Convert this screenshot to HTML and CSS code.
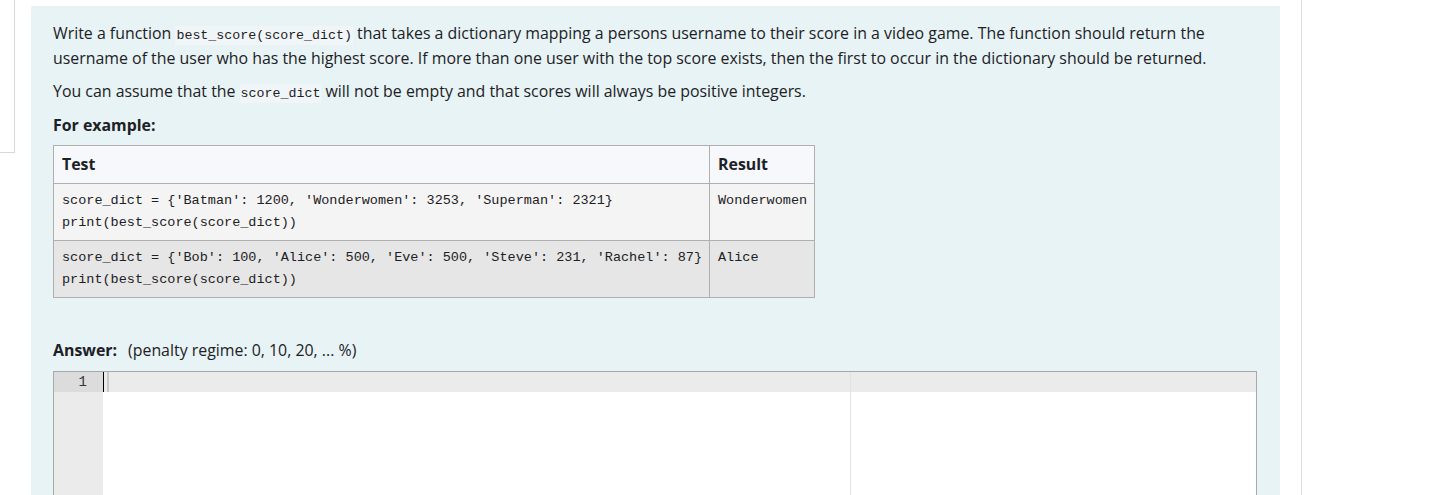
FILE: index.html
```html
<!DOCTYPE html>
<html>
<head>
<meta charset="utf-8">
<link rel="stylesheet" href="styles.css">
</head>
<body>
<div class="page">
  <div class="stub"></div>
  <main class="panel">
    <p>Write a function <code>best_score(score_dict)</code> that takes a dictionary mapping a persons username to their score in a video game. The function should return the username of the user who has the highest score. If more than one user with the top score exists, then the first to occur in the dictionary should be returned.</p>
    <p>You can assume that the <code>score_dict</code> will not be empty and that scores will always be positive integers.</p>
    <h4 class="example-title">For example:</h4>
    <table class="examples">
      <thead>
        <tr><th>Test</th><th>Result</th></tr>
      </thead>
      <tbody>
        <tr class="r0">
          <td><pre>score_dict = {'Batman': 1200, 'Wonderwomen': 3253, 'Superman': 2321}
print(best_score(score_dict))</pre></td>
          <td><pre>Wonderwomen</pre></td>
        </tr>
        <tr class="r1">
          <td><pre>score_dict = {'Bob': 100, 'Alice': 500, 'Eve': 500, 'Steve': 231, 'Rachel': 87}
print(best_score(score_dict))</pre></td>
          <td><pre>Alice</pre></td>
        </tr>
      </tbody>
    </table>
    <div class="answer-label"><b>Answer:</b><span class="penalty">(penalty regime: 0, 10, 20, ... %)</span></div>
    <div class="editor">
      <div class="gutter">
        <div class="gutter-cell active">1</div>
      </div>
      <div class="content">
        <div class="active-line"></div>
        <div class="cursor"></div>
        <div class="text-bar"></div>
        <div class="print-margin"></div>
      </div>
    </div>
  </main>
  <div class="divider"></div>
</div>
</body>
</html>
```
FILE: styles.css
```css
html, body {
  margin: 0;
  padding: 0;
  background: #ffffff;
}
body {
  font-family: "Open Sans", "Noto Sans", sans-serif;
  font-size: 15.9px;
  color: #1d2125;
  overflow: hidden;
}
.page {
  display: flex;
  align-items: flex-start;
  height: 495px;
  overflow: hidden;
}
.stub {
  flex: none;
  box-sizing: border-box;
  width: 15px;
  height: 153px;
  border-right: 1px solid #d3d8dd;
  border-bottom: 1px solid #d3d8dd;
  margin-right: 16px;
}
.panel {
  flex: none;
  box-sizing: border-box;
  width: 1249px;
  height: 489px;
  margin-top: 6px;
  padding: 15px 23px 0 22px;
  background: #e7f3f5;
  overflow: hidden;
}
.panel p {
  margin: 0 0 9px 0;
  line-height: 24.5px;
}
.panel code {
  font-family: "Liberation Mono", monospace;
  font-size: 13.3px;
  line-height: 1;
  background: #f0f6f7;
  padding: 2px 1px;
}
.example-title {
  margin: 0 0 8px 0;
  font-size: 15.9px;
  font-weight: 700;
  line-height: 24.5px;
}
.examples {
  border-collapse: collapse;
  margin: 0;
}
.examples th,
.examples td {
  border: 1px solid #afafaf;
  text-align: left;
  vertical-align: top;
}
.examples th {
  background: #f7f8fc;
  font-weight: 700;
  line-height: 24.5px;
  padding: 6px 8px 6px 8px;
}
.examples td {
  padding: 6px 7px 6px 8px;
}
.examples pre {
  margin: 0;
  font-family: "Liberation Mono", monospace;
  font-size: 13.5px;
  line-height: 22px;
  color: #1d2125;
}
.examples .r0 td {
  background: #f4f4f4;
}
.examples .r1 td {
  background: #e6e6e6;
}
.answer-label {
  margin-top: 40px;
  line-height: 24.5px;
}
.answer-label b {
  font-weight: 700;
}
.penalty {
  margin-left: 11px;
}
.editor {
  display: flex;
  margin-top: 9px;
  height: 300px;
  border: 1px solid #a9a9a9;
  border-bottom: none;
  background: #ffffff;
}
.gutter {
  flex: none;
  width: 49px;
  background: #ebebeb;
}
.gutter-cell {
  height: 20px;
  line-height: 20px;
  text-align: right;
  padding-right: 16px;
  font-family: "Liberation Mono", monospace;
  font-size: 14px;
  color: #333333;
}
.gutter-cell.active {
  background: #dcdcdc;
}
.content {
  position: relative;
  flex: 1;
}
.active-line {
  height: 20px;
  background: #ebebeb;
}
.cursor {
  position: absolute;
  left: 0;
  top: 0;
  width: 1px;
  height: 20px;
  background: #000000;
}
.text-bar {
  position: absolute;
  left: 4px;
  top: 0;
  width: 2px;
  height: 20px;
  background: #c9c9c9;
}
.print-margin {
  position: absolute;
  left: 747px;
  top: 0;
  bottom: 0;
  width: 1px;
  background: #e2e2e2;
}
.divider {
  flex: none;
  width: 1px;
  height: 495px;
  margin-left: 21px;
  background: #dedede;
}
```
